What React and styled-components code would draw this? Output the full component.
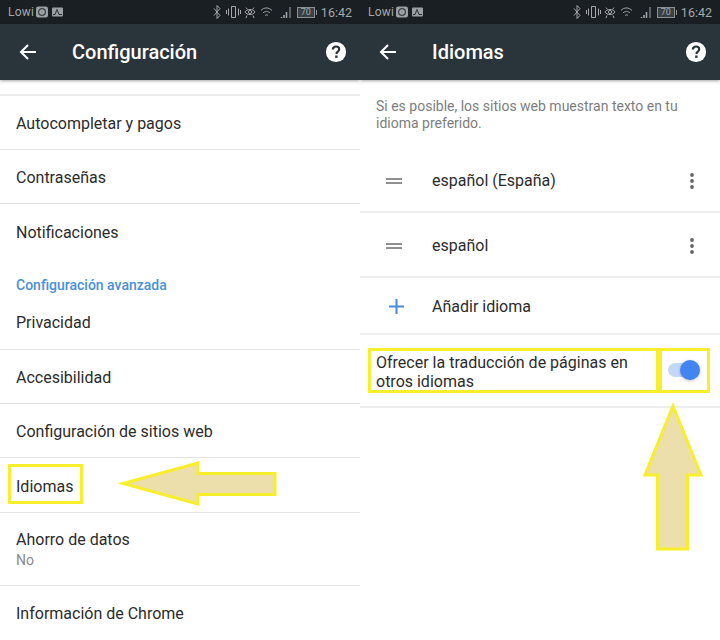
import React from "react";
import styled, { createGlobalStyle } from "styled-components";

const Global = createGlobalStyle`
  html, body { margin: 0; padding: 0; background: #fff; }
  body { font-family: Roboto, "Liberation Sans", sans-serif; }
  #root { width: 720px; height: 640px; overflow: hidden; }
`;

const Page = styled.div`
  position: relative;
  display: grid;
  grid-template-columns: 360px 360px;
  width: 720px;
  height: 640px;
  overflow: hidden;
  background: #fff;
`;
const Phone = styled.section`
  display: flex;
  flex-direction: column;
  height: 640px;
  overflow: hidden;
`;
const StatusBar = styled.div`
  display: flex;
  align-items: center;
  height: 24px;
  flex: none;
  padding: 0 8px;
  background: #191f23;
  color: #a4a8aa;
  font-size: 12px;
  letter-spacing: 0.2px;
`;
const Carrier = styled.span`
  margin-right: 1px;
`;
const StatusRight = styled.div`
  display: flex;
  align-items: center;
  margin-left: auto;
`;
const Battery = styled.span`
  position: relative;
  display: flex;
  align-items: center;
  justify-content: center;
  box-sizing: border-box;
  width: 18px;
  height: 11px;
  margin-left: 6px;
  border: 1px solid #8c9092;
  font-size: 9px;
  line-height: 9px;
  letter-spacing: 0;
  color: #a4a8aa;
  background: #3a4044;
  &::after {
    content: "";
    position: absolute;
    right: -3px;
    top: 2px;
    width: 1px;
    height: 5px;
    background: #8c9092;
  }
`;
const Clock = styled.span`
  font-size: 12.5px;
  letter-spacing: 0;
  margin-left: 6px;
`;
const Toolbar = styled.header`
  position: relative;
  z-index: 1;
  display: flex;
  align-items: center;
  flex: none;
  height: 56px;
  padding: 0 13px 0 18px;
  background: #2a343b;
  color: #fff;
  box-shadow: 0 1px 3px rgba(0, 0, 0, 0.35);
`;
const Title = styled.h1`
  margin: 0 0 0 34px;
  font-size: 20px;
  font-weight: 500;
  line-height: 24px;
`;
const HelpWrap = styled.span`
  display: flex;
  margin-left: auto;
`;
const Spacer = styled.div`
  flex: none;
  box-sizing: border-box;
  height: 15.6px;
  border-bottom: 2px solid #ececec;
`;
const Row = styled.div`
  display: flex;
  flex-direction: column;
  justify-content: center;
  flex: none;
  box-sizing: border-box;
  height: ${(p) => p.$h || 54.4}px;
  padding: 2px 16px 0;
  border-bottom: ${(p) => (p.$plain ? "none" : "1px solid #e4e4e4")};
  font-size: 16px;
  line-height: 21px;
  color: #2c2c2c;
`;
const SubText = styled.span`
  font-size: 14px;
  line-height: 20px;
  color: #8a8a8a;
`;
const SectionHead = styled.div`
  flex: none;
  box-sizing: border-box;
  height: 36.4px;
  padding: 17px 16px 0;
  font-size: 14px;
  line-height: 18px;
  font-weight: 500;
  color: #4a90d9;
`;
const Intro = styled.p`
  flex: none;
  box-sizing: border-box;
  margin: 0;
  padding: 18px 16px 0;
  height: 68px;
  font-size: 14px;
  line-height: 17px;
  color: #7d7d7d;
`;
const LangRow = styled.div`
  display: flex;
  align-items: center;
  flex: none;
  box-sizing: border-box;
  height: ${(p) => p.$h}px;
  padding: 2px 26px 0 24px;
  border-bottom: 2px solid #eeeeee;
  font-size: 16px;
  color: #2c2c2c;
`;
const LangIcon = styled.span`
  display: flex;
  flex: none;
  box-sizing: border-box;
  width: 48px;
  padding-left: ${(p) => p.$inset || 0}px;
`;
const LangName = styled.span`
  flex: 1;
`;
const ToggleRow = styled.div`
  display: flex;
  align-items: center;
  flex: none;
  box-sizing: border-box;
  height: 73px;
  padding: 2px 24px 0 16px;
  border-bottom: 2px solid #eeeeee;
  font-size: 16px;
  line-height: 19px;
  color: #2c2c2c;
`;
const ToggleText = styled.span`
  flex: 1;
`;
const Switch = styled.span`
  position: relative;
  display: block;
  flex: none;
  width: 28px;
  height: 14px;
  margin-top: -3px;
  border-radius: 7px;
  background: #c5d7f7;
`;
const Knob = styled.span`
  position: absolute;
  top: -3px;
  right: -4px;
  width: 20px;
  height: 20px;
  border-radius: 50%;
  background: #4285f0;
  box-shadow: 0 1px 3px rgba(0, 0, 0, 0.25);
`;
const Highlight = styled.div`
  position: absolute;
  z-index: 2;
  box-sizing: border-box;
  left: ${(p) => p.$x}px;
  top: ${(p) => p.$y}px;
  width: ${(p) => p.$w}px;
  height: ${(p) => p.$h}px;
  border: 3px solid #f7ef2c;
`;
const ArrowSvg = styled.svg`
  position: absolute;
  z-index: 2;
  left: ${(p) => p.$x}px;
  top: ${(p) => p.$y}px;
`;

const BackArrow = () => (
  <svg width="20" height="20" viewBox="0 0 20 20" fill="none" stroke="#fff" strokeWidth="2">
    <path d="M18 10H3M10 3l-7 7 7 7" />
  </svg>
);
const Help = () => (
  <svg width="22" height="22" viewBox="0 0 24 24">
    <circle cx="12" cy="12" r="11" fill="#fff" />
    <path d="M8.6 9.4c0-2 1.5-3.400 3.500-3.400s3.400 1.300 3.400 3.100c0 2.500-3 2.600-3 5.100" fill="none" stroke="#2a343b" strokeWidth="2.400" />
    <rect x="11.100" y="15.800" width="2.600" height="2.600" fill="#2a343b" />
  </svg>
);
const Handle = () => (
  <svg width="18" height="8" viewBox="0 0 18 8">
    <path d="M1 1h16v2H1zM1 5h16v2H1z" fill="#8f8f8f" />
  </svg>
);
const Dots = () => (
  <svg width="4" height="16" viewBox="0 0 4 16" fill="#666">
    <circle cx="2" cy="2" r="1.900" />
    <circle cx="2" cy="8" r="1.900" />
    <circle cx="2" cy="14" r="1.900" />
  </svg>
);
const Plus = () => (
  <svg width="15" height="15" viewBox="0 0 15 15" fill="none" stroke="#4a8ad0" strokeWidth="2">
    <path d="M7.500 0v15M0 7.500h15" />
  </svg>
);
const CarrierIcons = () => (
  <svg width="30" height="12" viewBox="0 0 30 12" fill="none">
    <rect x="1" y="0.500" width="12" height="11" rx="2" fill="#9aa0a2" />
    <circle cx="7" cy="6" r="3.400" stroke="#3b4145" strokeWidth="1.200" />
    <rect x="17" y="1.500" width="11" height="9" rx="1" fill="#9aa0a2" />
    <path d="M18 8.500h2l2-5 2 5h3" stroke="#2a3034" strokeWidth="1" />
  </svg>
);
const StatusIcons = () => (
  <svg width="78" height="14" viewBox="0 0 78 14" fill="none" stroke="#a4a8aa" strokeWidth="1">
    <path d="M1 3.500l6 7-3 3V.500l3 3-6 7" />
    <path d="M13.500 5v4M15.500 3.500v7M18.500 1.500h4v11h-4zM25.500 3.500v7M27.500 5v4" />
    <path d="M32 7c2-3.400 8-3.400 10 0-2 3.400-8 3.400-10 0z" />
    <circle cx="37" cy="7" r="1.600" />
    <path d="M33 2.500l1.500 2M41 2.500l-1.500 2M34 10.500l-1 2.500M40 10.500l1 2.500" />
    <path d="M48 5.500c3-3.400 7.500-3.400 11 0M50 8c2-2 5-2 7 0M52 10.500c1-.8 2-.8 3 0" />
    <path d="M68.500 13v-1M71 13v-3M73.500 13V7" strokeWidth="1.500" />
    <path d="M77 13V2" />
  </svg>
);

const Status = () => (
  <StatusBar>
    <Carrier>Lowi</Carrier>
    <CarrierIcons />
    <StatusRight>
      <StatusIcons />
      <Battery>70</Battery>
      <Clock>16:42</Clock>
    </StatusRight>
  </StatusBar>
);
const Bar = ({ title }) => (
  <Toolbar>
    <BackArrow />
    <Title>{title}</Title>
    <HelpWrap>
      <Help />
    </HelpWrap>
  </Toolbar>
);

export default function App() {
  return (
    <Page>
      <Global />
      <Phone>
        <Status />
        <Bar title="Configuración" />
        <Spacer />
        <Row>Autocompletar y pagos</Row>
        <Row>Contraseñas</Row>
        <Row $plain>Notificaciones</Row>
        <SectionHead>Configuración avanzada</SectionHead>
        <Row>Privacidad</Row>
        <Row>Accesibilidad</Row>
        <Row>Configuración de sitios web</Row>
        <Row>Idiomas</Row>
        <Row $h={73}>
          Ahorro de datos
          <SubText>No</SubText>
        </Row>
        <Row $plain>Información de Chrome</Row>
      </Phone>
      <Phone>
        <Status />
        <Bar title="Idiomas" />
        <Intro>Si es posible, los sitios web muestran texto en tu idioma preferido.</Intro>
        <LangRow $h={65}>
          <LangIcon $inset={1}><Handle /></LangIcon>
          <LangName>español (España)</LangName>
          <Dots />
        </LangRow>
        <LangRow $h={65}>
          <LangIcon $inset={1}><Handle /></LangIcon>
          <LangName>español</LangName>
          <Dots />
        </LangRow>
        <LangRow $h={57}>
          <LangIcon $inset={5}><Plus /></LangIcon>
          <LangName>Añadir idioma</LangName>
        </LangRow>
        <ToggleRow>
          <ToggleText>Ofrecer la traducción de páginas en<br />otros idiomas</ToggleText>
          <Switch><Knob /></Switch>
        </ToggleRow>
      </Phone>
      <Highlight $x={8} $y={464} $w={75} $h={40} />
      <Highlight $x={368} $y={348} $w={291} $h={45} />
      <Highlight $x={659} $y={348} $w={51} $h={45} />
      <ArrowSvg $x={115} $y={458} width="165" height="52" viewBox="115 458 165 52">
        <path d="M123 483.500L198 463v10.500h77v21h-77V504z" fill="#ecdfab" stroke="#f7ef2c" strokeWidth="3" />
      </ArrowSvg>
      <ArrowSvg $x={638} $y={398} width="70" height="155" viewBox="638 398 70 155">
        <path d="M673 406l28 69h-13.500v74h-30v-74H645z" fill="#ecdfab" stroke="#f7ef2c" strokeWidth="3" />
      </ArrowSvg>
    </Page>
  );
}
